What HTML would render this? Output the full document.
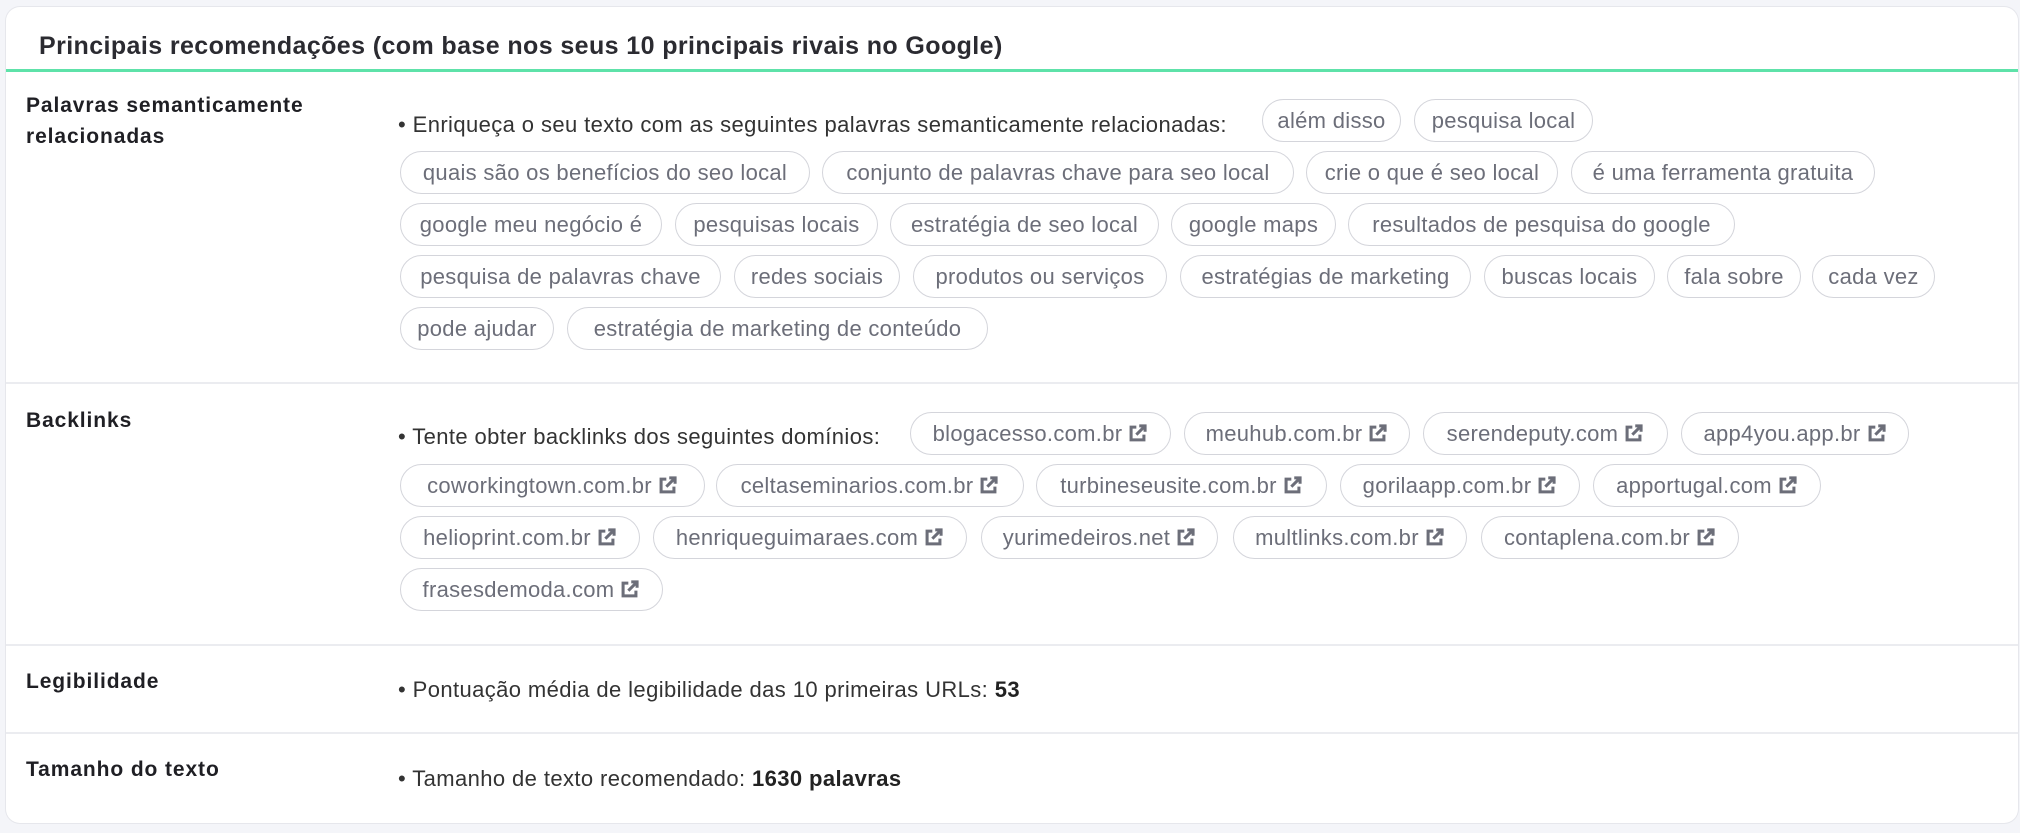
<!DOCTYPE html>
<html><head><meta charset="utf-8"><style>
body{margin:0;width:2020px;height:833px;background:#f4f5f9;font-family:"Liberation Sans",sans-serif;position:relative;overflow:hidden}
.card{position:absolute;left:6px;top:7px;width:2012px;height:816px;background:#fff;border-radius:14px;box-shadow:0 0 0 1px #e6e7ec}
.t{position:absolute;white-space:nowrap}
.title{left:33px;top:25px;font-size:25px;font-weight:bold;color:#2b2b31;letter-spacing:0.4px}
.green{position:absolute;left:0;right:0;top:62px;height:3px;background:#5ee2a9}
.sep{position:absolute;left:0;right:0;height:2px;background:#ebecf0}
.lab{font-size:21px;font-weight:bold;color:#1f1f24;line-height:31px;left:20px;letter-spacing:0.9px}
.txt{font-size:22px;color:#333;left:392px;letter-spacing:0.4px}
.txt b{color:#222}
.chip{position:absolute;border:1px solid #d4d5db;border-radius:22px;box-sizing:border-box;height:43px;font-size:22px;color:#6c6e79;line-height:41px;text-align:center;white-space:nowrap;letter-spacing:0.3px}
.chip svg{vertical-align:-3px;margin-left:5px}
</style></head><body>
<div class="card">
<div class="t title">Principais recomendações (com base nos seus 10 principais rivais no Google)</div>
<div class="green"></div>
<div class="t lab" style="top:83px">Palavras semanticamente<br>relacionadas</div>
<div class="t txt" style="top:105px">• Enriqueça o seu texto com as seguintes palavras semanticamente relacionadas:</div>
<div class="sep" style="top:375px"></div>
<div class="t lab" style="top:398px">Backlinks</div>
<div class="t txt" style="top:417px">• Tente obter backlinks dos seguintes domínios:</div>
<div class="sep" style="top:637px"></div>
<div class="t lab" style="top:659px">Legibilidade</div>
<div class="t txt" style="top:670px">• Pontuação média de legibilidade das 10 primeiras URLs: <b>53</b></div>
<div class="sep" style="top:725px"></div>
<div class="t lab" style="top:747px">Tamanho do texto</div>
<div class="t txt" style="top:759px">• Tamanho de texto recomendado: <b>1630 palavras</b></div>
</div>
<svg width="0" height="0" style="position:absolute"><defs><symbol id="ext" viewBox="0 0 18 18"><path d="M8 3.5H3.5v11h11V10" fill="none" stroke="#6c6e79" stroke-width="2.6"/><path d="M10.5 2.5h5v5M15.5 2.5L8 10" fill="none" stroke="#6c6e79" stroke-width="2.6"/></symbol></defs></svg>
<div class="chip" style="left:1262px;top:99px;width:139px">além disso</div>
<div class="chip" style="left:1414px;top:99px;width:179px">pesquisa local</div>
<div class="chip" style="left:400px;top:151px;width:410px">quais são os benefícios do seo local</div>
<div class="chip" style="left:822px;top:151px;width:472px">conjunto de palavras chave para seo local</div>
<div class="chip" style="left:1306px;top:151px;width:252px">crie o que é seo local</div>
<div class="chip" style="left:1571px;top:151px;width:304px">é uma ferramenta gratuita</div>
<div class="chip" style="left:400px;top:203px;width:262px">google meu negócio é</div>
<div class="chip" style="left:675px;top:203px;width:203px">pesquisas locais</div>
<div class="chip" style="left:890px;top:203px;width:269px">estratégia de seo local</div>
<div class="chip" style="left:1171px;top:203px;width:165px">google maps</div>
<div class="chip" style="left:1348px;top:203px;width:387px">resultados de pesquisa do google</div>
<div class="chip" style="left:400px;top:255px;width:321px">pesquisa de palavras chave</div>
<div class="chip" style="left:734px;top:255px;width:166px">redes sociais</div>
<div class="chip" style="left:913px;top:255px;width:254px">produtos ou serviços</div>
<div class="chip" style="left:1180px;top:255px;width:291px">estratégias de marketing</div>
<div class="chip" style="left:1484px;top:255px;width:171px">buscas locais</div>
<div class="chip" style="left:1667px;top:255px;width:134px">fala sobre</div>
<div class="chip" style="left:1812px;top:255px;width:123px">cada vez</div>
<div class="chip" style="left:400px;top:307px;width:154px">pode ajudar</div>
<div class="chip" style="left:567px;top:307px;width:421px">estratégia de marketing de conteúdo</div>

<div class="chip" style="left:910px;top:412px;width:261px">blogacesso.com.br<svg width="21" height="21"><use href="#ext"/></svg></div>
<div class="chip" style="left:1184px;top:412px;width:226px">meuhub.com.br<svg width="21" height="21"><use href="#ext"/></svg></div>
<div class="chip" style="left:1423px;top:412px;width:245px">serendeputy.com<svg width="21" height="21"><use href="#ext"/></svg></div>
<div class="chip" style="left:1681px;top:412px;width:228px">app4you.app.br<svg width="21" height="21"><use href="#ext"/></svg></div>
<div class="chip" style="left:400px;top:464px;width:305px">coworkingtown.com.br<svg width="21" height="21"><use href="#ext"/></svg></div>
<div class="chip" style="left:716px;top:464px;width:308px">celtaseminarios.com.br<svg width="21" height="21"><use href="#ext"/></svg></div>
<div class="chip" style="left:1036px;top:464px;width:291px">turbineseusite.com.br<svg width="21" height="21"><use href="#ext"/></svg></div>
<div class="chip" style="left:1340px;top:464px;width:240px">gorilaapp.com.br<svg width="21" height="21"><use href="#ext"/></svg></div>
<div class="chip" style="left:1593px;top:464px;width:228px">apportugal.com<svg width="21" height="21"><use href="#ext"/></svg></div>
<div class="chip" style="left:400px;top:516px;width:240px">helioprint.com.br<svg width="21" height="21"><use href="#ext"/></svg></div>
<div class="chip" style="left:653px;top:516px;width:314px">henriqueguimaraes.com<svg width="21" height="21"><use href="#ext"/></svg></div>
<div class="chip" style="left:981px;top:516px;width:237px">yurimedeiros.net<svg width="21" height="21"><use href="#ext"/></svg></div>
<div class="chip" style="left:1233px;top:516px;width:234px">multlinks.com.br<svg width="21" height="21"><use href="#ext"/></svg></div>
<div class="chip" style="left:1481px;top:516px;width:258px">contaplena.com.br<svg width="21" height="21"><use href="#ext"/></svg></div>
<div class="chip" style="left:400px;top:568px;width:263px">frasesdemoda.com<svg width="21" height="21"><use href="#ext"/></svg></div>
</body></html>
